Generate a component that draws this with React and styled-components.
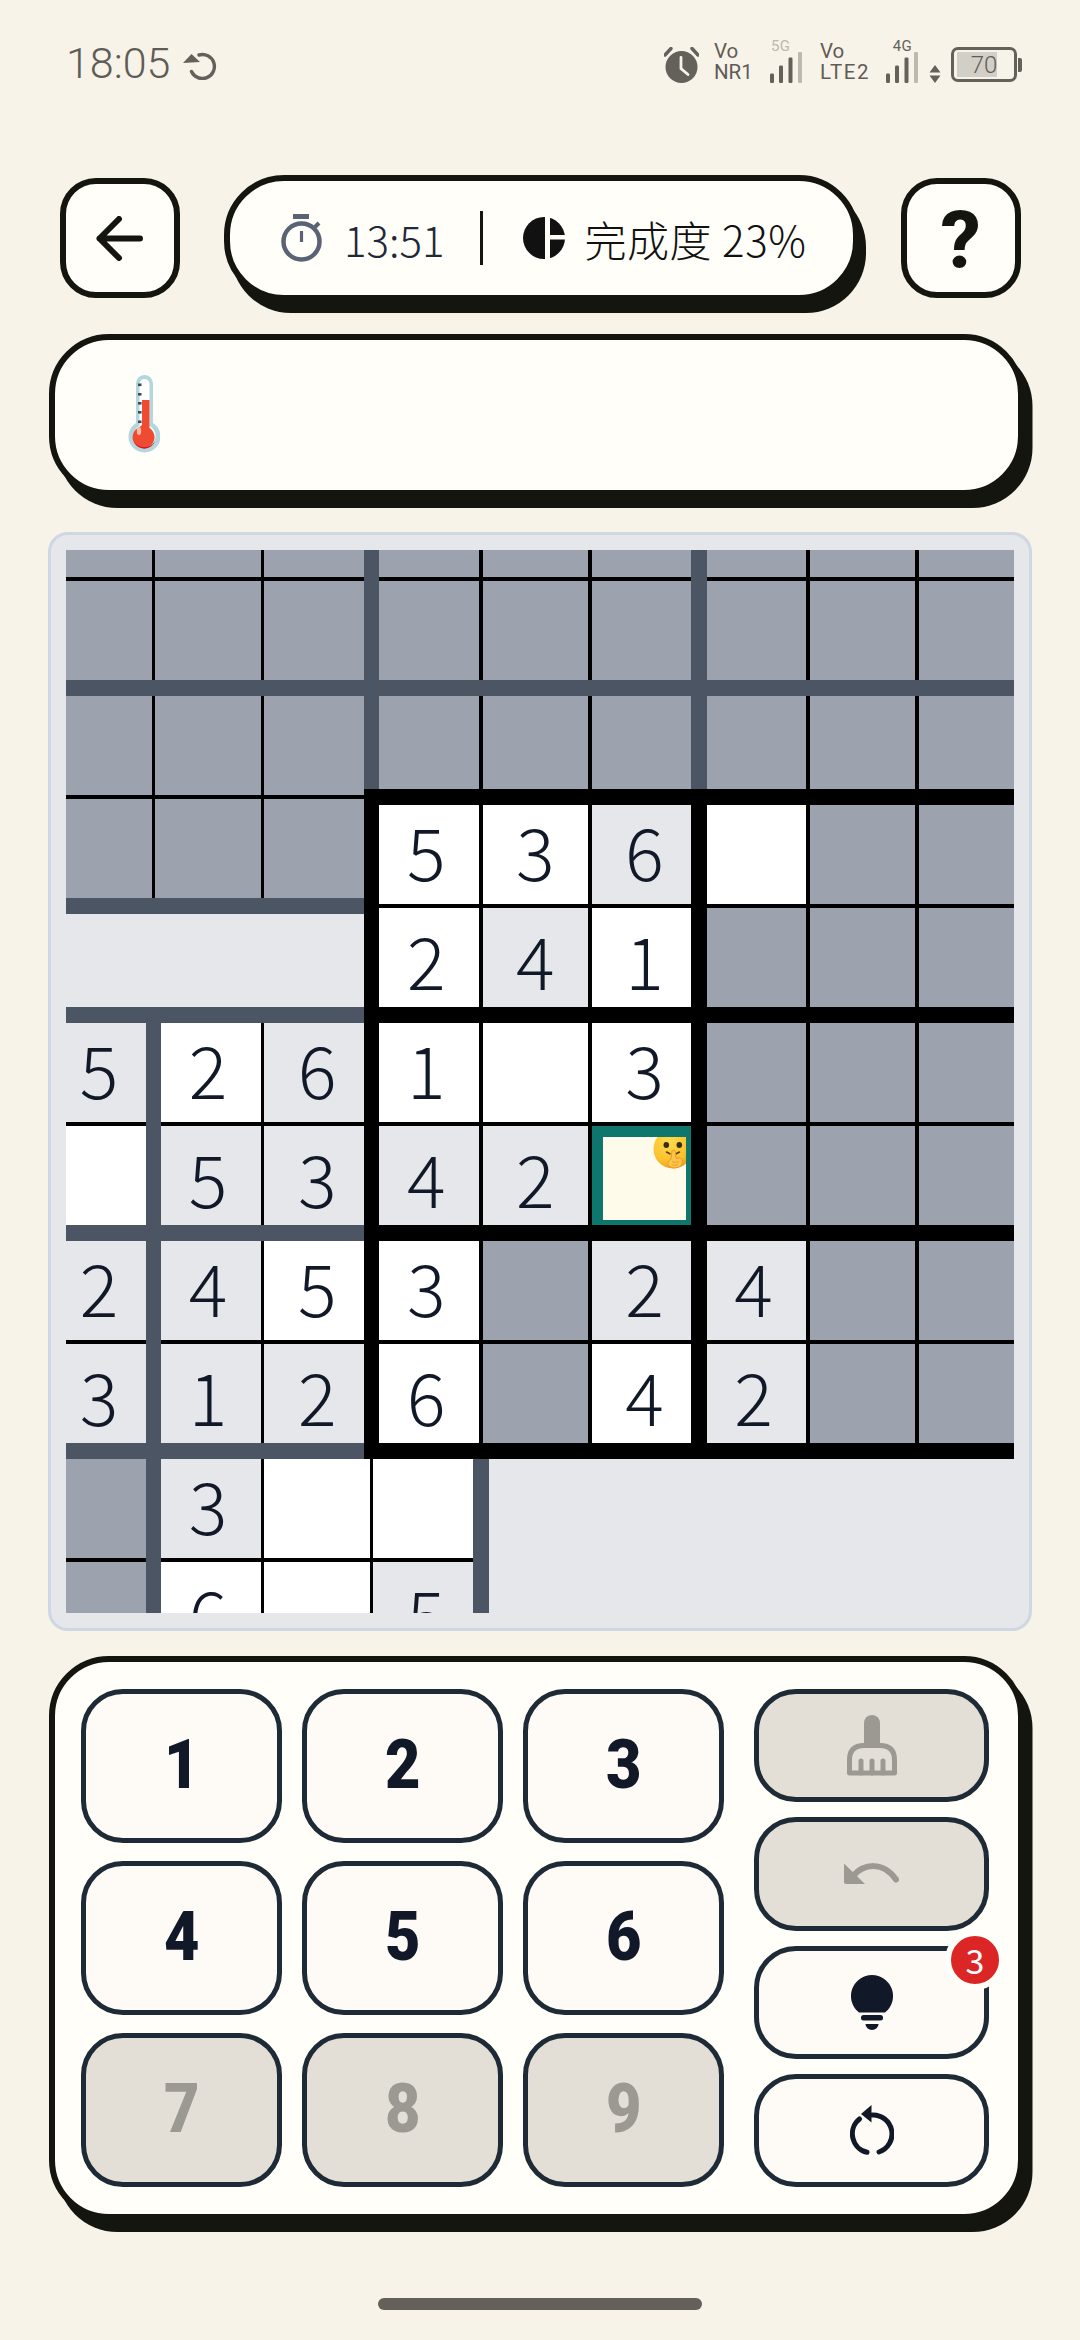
import React from "react";
import styled, { createGlobalStyle } from "styled-components";

const PITCH_X = 109.1;
const PITCH_Y = 109;
const THIN = 3.5;
const THICK = 15.5;
const CJK = `"Noto Sans CJK SC", "Noto Sans", sans-serif`;
const INK = "#15150f";

const Global = createGlobalStyle`
  html, body { margin: 0; padding: 0; background: #f7f3e9; }
  * { box-sizing: border-box; }
`;

const Page = styled.div`
  width: 1080px;
  height: 2340px;
  overflow: hidden;
  background: #f7f3e9;
  display: flex;
  flex-direction: column;
`;

/* ---------- status bar ---------- */
const StatusBar = styled.div`
  height: 84px;
  margin-bottom: 91px;
  padding: 0 58px 1px 66px;
  display: flex;
  align-items: flex-end;
  justify-content: space-between;
  color: #5f5c56;
  font-family: Roboto, sans-serif;
`;
const Clock = styled.div`
  display: flex;
  align-items: flex-end;
  gap: 12px;
  padding-bottom: 3px;
  font-size: 43px;
  font-weight: 300;
  line-height: 34px;
`;
const Cluster = styled.div`
  display: flex;
  align-items: flex-end;
`;
const StatusItem = styled.div`
  margin-left: ${(p) => p.$ml || 0}px;
  width: ${(p) => (p.$w ? `${p.$w}px` : "auto")};
  flex: none;
  display: flex;
  flex-direction: column;
  align-items: ${(p) => p.$align || "flex-start"};
`;
const NetText = styled.span`
  font-size: 20.5px;
  line-height: 21px;
  letter-spacing: ${(p) => p.$ls || 0}px;
  white-space: nowrap;
`;
const TechText = styled.span`
  font-size: 15px;
  line-height: 11px;
  letter-spacing: 0.4px;
  padding-left: 1px;
  color: ${(p) => (p.$dim ? "#bcb9b1" : "#64615b")};
`;
const Battery = styled.div`
  margin-left: 10px;
  display: flex;
  align-items: center;
  margin-bottom: 1px;
`;
const BatteryShell = styled.div`
  position: relative;
  width: 66px;
  height: 35px;
  border: 3.5px solid #64615b;
  border-radius: 7px;
  display: flex;
  align-items: center;
  justify-content: center;
  font-size: 24px;
  font-weight: 300;
`;
const BatteryLevel = styled.div`
  position: absolute;
  left: 3px;
  top: 2px;
  bottom: 2px;
  width: 40px;
  background: #d2cfc6;
`;
const BatteryText = styled.span`
  position: relative;
`;
const BatteryNub = styled.div`
  width: 4px;
  height: 14px;
  margin-left: 1px;
  background: #64615b;
  border-radius: 0 2px 2px 0;
`;

/* ---------- header ---------- */
const Header = styled.div`
  padding: 0 59.5px 0 60px;
  height: 126px;
  display: flex;
  align-items: center;
`;
const SquareButton = styled.div`
  width: 119.5px;
  height: 120px;
  flex: none;
  background: #fffef9;
  border: 6px solid ${INK};
  border-radius: 36px;
  display: flex;
  align-items: center;
  justify-content: center;
`;
const HelpButton = styled(SquareButton)`
  margin-left: auto;
`;
const QuestionMark = styled.span`
  font-family: Roboto, sans-serif;
  font-weight: 800;
  font-size: 80px;
  line-height: 1;
  padding-top: 5px;
  color: ${INK};
`;
const StatPill = styled.div`
  margin-left: 44.5px;
  width: 634.5px;
  height: 126px;
  flex: none;
  background: #fffef9;
  border: 6px solid ${INK};
  border-radius: 60px;
  box-shadow: 7px 12px 0 ${INK};
  display: flex;
  align-items: center;
  padding-left: 51px;
  font-family: ${CJK};
  font-weight: 300;
  font-size: 42px;
`;
const TimeText = styled.span`
  margin-left: 21px;
  color: #1f2937;
`;
const Divider = styled.div`
  width: 3px;
  height: 54px;
  background: ${INK};
  margin: 0 40px 0 36px;
`;
const ProgressText = styled.span`
  margin-left: 19px;
  color: #111;
  letter-spacing: 0.6px;
  white-space: nowrap;
`;

/* ---------- info card ---------- */
const InfoCard = styled.div`
  margin: 33px 0 0 49px;
  width: 974.5px;
  height: 162px;
  background: #fffef9;
  border: 6px solid ${INK};
  border-radius: 60px;
  box-shadow: 8.5px 12px 0 ${INK};
  display: flex;
  align-items: center;
  padding: 0 0 2px 73px;
`;

/* ---------- board ---------- */
const BoardPanel = styled.div`
  margin: 36px 0 0 48px;
  width: 984px;
  height: 1099px;
  padding: 15px;
  background: #e5e7eb;
  border: 3px solid #cfd7e3;
  border-radius: 20px;
`;
const BoardViewport = styled.div`
  width: 948px;
  height: 1063px;
  overflow: hidden;
`;
const BoardGrid = styled.div`
  position: relative;
  margin: -80px 0 0 -21.6px;
  width: ${9 * PITCH_X}px;
  height: ${11 * PITCH_Y}px;
  display: grid;
  grid-template-columns: repeat(9, ${PITCH_X}px);
  grid-template-rows: repeat(11, ${PITCH_Y}px);
`;
const CELL_BG = { g: "#9ca3af", w: "#ffffff", l: "#e5e7eb", x: "transparent" };
const Cell = styled.div`
  position: relative;
  background: ${(p) => CELL_BG[p.$kind]};
  display: flex;
  align-items: center;
  justify-content: center;
  font-family: ${CJK};
  font-weight: 300;
  font-size: 72px;
  line-height: 1;
  padding-bottom: 3px;
  color: #111827;
`;
const SelectedCell = styled.div`
  position: relative;
  background: #fffbeb;
  border: 13px solid #0f766e;
  overflow: hidden;
`;
const EmojiMark = styled.svg`
  position: absolute;
  top: -8px;
  right: -7px;
  width: 40px;
  height: 40px;
`;
const GridLine = styled.div`
  position: absolute;
  background: ${(p) => (p.$kind === "slate" ? "#4b5563" : "#000")};
  ${(p) => {
    const w = p.$kind === "thin" ? THIN : THICK;
    const pad = p.$kind === "black" ? THICK / 2 : 0;
    return p.$dir === "h"
      ? `left:${p.$from * PITCH_X - pad}px;width:${(p.$to - p.$from) * PITCH_X + pad * 2}px;top:${p.$at * PITCH_Y - w / 2}px;height:${w}px;`
      : `top:${p.$from * PITCH_Y - pad}px;height:${(p.$to - p.$from) * PITCH_Y + pad * 2}px;left:${p.$at * PITCH_X - w / 2}px;width:${w}px;`;
  }}
`;

/* ---------- keypad ---------- */
const KeypadCard = styled.div`
  margin: 25px 0 0 49px;
  width: 974.5px;
  height: 564px;
  background: #fffef9;
  border: 6px solid ${INK};
  border-radius: 60px;
  box-shadow: 8.5px 12px 0 ${INK};
  padding: 27px 28.5px 27px 26.4px;
  display: flex;
  justify-content: space-between;
`;
const NumberGrid = styled.div`
  display: grid;
  grid-template-columns: repeat(3, 201px);
  grid-auto-rows: 154px;
  column-gap: 20px;
  row-gap: 18px;
`;
const KeyBase = styled.div`
  background: ${(p) => (p.$off ? "#e3dfd6" : "#fefbf6")};
  border: 5.5px solid #1e2a35;
  display: flex;
  align-items: center;
  justify-content: center;
`;
const NumberKey = styled(KeyBase)`
  border-radius: 42px;
  font-family: Roboto, sans-serif;
  font-weight: 900;
  font-size: 68px;
  line-height: 1;
  padding-bottom: 3px;
  color: ${(p) => (p.$off ? "#9c9992" : "#111827")};
`;
const KeyDigit = styled.span`
  display: inline-block;
  transform: scaleX(0.9);
`;
const ActionColumn = styled.div`
  width: 235px;
  display: flex;
  flex-direction: column;
  gap: 15px;
`;
const ActionKey = styled(KeyBase)`
  position: relative;
  height: 113.5px;
  border-radius: 42px;
`;
const Badge = styled.div`
  position: absolute;
  top: -21px;
  right: -21px;
  width: 60px;
  height: 60px;
  border-radius: 50%;
  background: #dc2626;
  border: 6px solid #fffef9;
  display: flex;
  align-items: center;
  justify-content: center;
  color: #fff;
  font-family: ${CJK};
  font-weight: 400;
  font-size: 34px;
  line-height: 1;
`;

/* ---------- home indicator ---------- */
const HomeBar = styled.div`
  margin: 78px auto 0;
  width: 324px;
  height: 12px;
  border-radius: 6px;
  background: #64615b;
`;

/* ---------- icons ---------- */
const RefreshSmall = () => (
  <svg width="36" height="30" viewBox="0 0 36 30" fill="none">
    <path d="M17 5 A12 12 0 1 1 9.5 21.5" stroke="#64615b" strokeWidth="3.4" strokeLinecap="round" />
    <path d="M9.5 4 L18 12 L1 13 Z" fill="#64615b" />
  </svg>
);
const AlarmIcon = () => (
  <svg width="35" height="36" viewBox="0 0 35 36" style={{ display: "block" }}>
    <circle cx="17.5" cy="20" r="16" fill="#64615b" />
    <path d="M1 8 L7 1.5 M34 8 L28 1.5" stroke="#64615b" strokeWidth="3.4" strokeLinecap="round" />
    <path d="M17 10.5 V21.5 L24 27.5" stroke="#f7f3e9" strokeWidth="2.8" fill="none" strokeLinecap="round" />
  </svg>
);
const SignalBars = () => (
  <svg width="32" height="31" viewBox="0 0 32 31" style={{ display: "block" }}>
    <rect x="0" y="21.5" width="4" height="9.5" rx="1.2" fill="#64615b" />
    <rect x="9" y="13.5" width="4" height="17.5" rx="1.2" fill="#64615b" />
    <rect x="18.5" y="5.5" width="4" height="25.5" rx="1.2" fill="#64615b" />
    <rect x="28" y="0" width="4" height="31" rx="1.2" fill="#bcb9b1" />
  </svg>
);
const UpDown = () => (
  <svg width="12" height="18" viewBox="0 0 12 18" style={{ display: "block" }}>
    <path d="M6 0 L11.5 7.5 H0.5 Z M6 18 L11.5 10.5 H0.5 Z" fill="#64615b" />
  </svg>
);
const BackArrow = () => (
  <svg width="47" height="45" viewBox="0 0 47 45" fill="none" stroke="#15150f" strokeWidth="6" strokeLinecap="round" strokeLinejoin="round">
    <path d="M23 3 L3.5 22.5 L23 42 M3.5 22.5 H44" />
  </svg>
);
const TimerIcon = () => (
  <svg width="42" height="48" viewBox="0 0 42 48" fill="none" style={{ flex: "none" }}>
    <rect x="12" y="0" width="16" height="5" fill="#5a6373" />
    <circle cx="20.5" cy="27.5" r="18" stroke="#5a6373" strokeWidth="4.5" />
    <path d="M20.5 17 V28" stroke="#5a6373" strokeWidth="3.2" />
    <path d="M34 13 L38 9" stroke="#5a6373" strokeWidth="4" />
  </svg>
);
const PieIcon = () => (
  <svg width="42" height="42" viewBox="0 0 42 42" style={{ flex: "none" }}>
    <circle cx="21" cy="21" r="21" fill="#111" />
    <rect x="22" y="0" width="5" height="42" fill="#fffef9" />
    <rect x="27" y="18" width="15" height="4.5" fill="#fffef9" />
  </svg>
);
const Thermometer = () => (
  <svg width="32" height="79" viewBox="0 0 32 79">
    <path d="M8 8.5 a8.5 8.5 0 0 1 17 0 V48 a16 16 0 1 1 -17 0 Z" fill="#b4d7df" />
    <path d="M11.5 9 a5 5 0 0 1 10 0 V51 a11 11 0 1 1 -10 0 Z" fill="#fff" />
    <path d="M14 25 H21.5 V53 a11 11 0 1 1 -10 -1 L14 50 Z" fill="#ef4b30" />
    <path d="M6 66 a11 11 0 0 0 21 0 a12 12 0 0 1 -21 0 Z" fill="#d3152a" />
    <ellipse cx="11" cy="56" rx="2.2" ry="4" fill="#f7b8a8" />
    <g fill="#3d4a55">
      <rect x="10" y="8.5" width="3.5" height="2.6" />
      <rect x="10" y="18" width="3.5" height="2.6" />
      <rect x="10" y="27" width="3.5" height="2.6" />
      <rect x="10" y="36" width="3.5" height="2.6" />
      <rect x="10" y="45.5" width="3.5" height="2.6" />
    </g>
  </svg>
);
const BroomIcon = () => (
  <svg width="50" height="61" viewBox="0 0 50 61" fill="none">
    <path d="M17 30 V8 a8 8 0 0 1 16 0 V30 Z" fill="#9c9992" />
    <path d="M2.5 58 V45 Q2.5 30.5 17 30.5 H33 Q47.5 30.5 47.5 45 V58 Z" stroke="#9c9992" strokeWidth="5" strokeLinejoin="round" />
    <path d="M14 46 V58 M25 46 V58 M36 46 V58" stroke="#9c9992" strokeWidth="5" strokeLinecap="round" />
  </svg>
);
const UndoIcon = () => (
  <svg width="55" height="24" viewBox="0 0 55 24" fill="none">
    <path d="M0 1.5 L21 22 H2 a2 2 0 0 1 -2 -2 Z" fill="#9c9992" />
    <path d="M9 14 C20 1.5 39 -1 52 17.5" stroke="#9c9992" strokeWidth="6" strokeLinecap="round" />
  </svg>
);
const BulbIcon = () => (
  <svg width="42" height="55" viewBox="0 0 42 55" fill="#111827">
    <path d="M21 0 a21 21 0 0 1 13 37.5 H8 A21 21 0 0 1 21 0 Z" />
    <rect x="10" y="40" width="22" height="5.5" rx="2.5" />
    <path d="M14.5 49 H27.5 a6.5 6 0 0 1 -13 0 Z" />
  </svg>
);
const ResetIcon = () => (
  <svg width="44" height="50" viewBox="0 0 44 50" fill="none" stroke="#111827" strokeWidth="5" strokeLinecap="round">
    <path d="M22 10 A19 19 0 0 1 29 47" />
    <path d="M17 47.3 A19 19 0 0 1 9.5 14" />
    <path d="M21.5 0 V17.5 L11 9 Z" fill="#111827" stroke="none" />
  </svg>
);
const ShushEmoji = () => (
  <EmojiMark viewBox="0 0 40 40">
    <defs>
      <radialGradient id="face" cx="40%" cy="30%" r="75%">
        <stop offset="0%" stopColor="#fedc4a" />
        <stop offset="70%" stopColor="#fbc02d" />
        <stop offset="100%" stopColor="#ee9414" />
      </radialGradient>
    </defs>
    <circle cx="20" cy="20" r="19.5" fill="url(#face)" />
    <ellipse cx="13.3" cy="16" rx="2.8" ry="3" fill="#3a2a18" />
    <ellipse cx="26.3" cy="16" rx="2.8" ry="3" fill="#3a2a18" />
    <path d="M13.5 23 l3.4 1.8 M26.5 23 l-3.4 1.8" stroke="#5a3d1c" strokeWidth="1.6" strokeLinecap="round" />
    <path d="M18.8 23 a1.8 1.8 0 0 1 3.6 0 L23 29 Q28 28 29.5 31 Q30 36 25 38.5 Q18 40 15 36 Q13.5 32 18 30 Z" fill="#fcc44c" stroke="#ea9620" strokeWidth="0.9" />
    <path d="M19 33 H26 M19 36 H25" stroke="#ea9620" strokeWidth="0.8" />
  </EmojiMark>
);

/* ---------- data ---------- */
const BOARD = [
  "g g g g g g g g g",
  "g g g g g g g g g",
  "g g g g g g g g g",
  "g g g w5 w3 l6 w g g",
  "x x x w2 l4 w1 g g g",
  "l5 w2 l6 w1 w w3 g g g",
  "w l5 l3 l4 l2 * g g g",
  "l2 l4 w5 w3 g l2 l4 g g",
  "l3 l1 l2 w6 g w4 l2 g g",
  "g l3 w w x x x x x",
  "g w6 w l5 x x x x x",
].map((r) => r.split(" "));

const L = (dir, at, from, to, kind) => ({ dir, at, from, to, kind });
const LINES = [
  L("h", 1, 0, 9, "thin"),
  L("h", 3, 0, 3, "thin"),
  L("h", 4, 3, 9, "thin"),
  L("h", 6, 0, 9, "thin"),
  L("h", 8, 0, 9, "thin"),
  L("h", 10, 0, 4, "thin"),
  L("v", 1, 0, 4, "thin"),
  L("v", 2, 0, 4, "thin"),
  L("v", 2, 5, 11, "thin"),
  L("v", 3, 9, 11, "thin"),
  L("v", 4, 0, 9, "thin"),
  L("v", 5, 0, 9, "thin"),
  L("v", 7, 0, 9, "thin"),
  L("v", 8, 0, 9, "thin"),
  L("h", 2, 0, 9, "slate"),
  L("h", 4, 0, 3, "slate"),
  L("h", 5, 0, 3, "slate"),
  L("h", 7, 0, 3, "slate"),
  L("h", 9, 0, 3, "slate"),
  L("v", 1, 5, 11, "slate"),
  L("v", 3, 0, 3, "slate"),
  L("v", 4, 9, 11, "slate"),
  L("v", 6, 0, 3, "slate"),
  L("h", 3, 3, 9, "black"),
  L("h", 5, 3, 9, "black"),
  L("h", 7, 3, 9, "black"),
  L("h", 9, 3, 9, "black"),
  L("v", 3, 3, 9, "black"),
  L("v", 6, 3, 9, "black"),
];

export default function App() {
  return (
    <Page>
      <Global />
      <StatusBar>
        <Clock>
          18:05
          <RefreshSmall />
        </Clock>
        <Cluster>
          <StatusItem><AlarmIcon /></StatusItem>
          <StatusItem $ml={15} $w={39}>
            <NetText>Vo</NetText>
            <NetText>NR1</NetText>
          </StatusItem>
          <StatusItem $ml={17}>
            <TechText $dim>5G</TechText>
            <SignalBars />
          </StatusItem>
          <StatusItem $ml={18} $w={51}>
            <NetText>Vo</NetText>
            <NetText $ls={1.6}>LTE2</NetText>
          </StatusItem>
          <StatusItem $ml={15} $align="center">
            <TechText>4G</TechText>
            <SignalBars />
          </StatusItem>
          <StatusItem $ml={11}><UpDown /></StatusItem>
          <Battery>
            <BatteryShell>
              <BatteryLevel />
              <BatteryText>70</BatteryText>
            </BatteryShell>
            <BatteryNub />
          </Battery>
        </Cluster>
      </StatusBar>

      <Header>
        <SquareButton><BackArrow /></SquareButton>
        <StatPill>
          <TimerIcon />
          <TimeText>13:51</TimeText>
          <Divider />
          <PieIcon />
          <ProgressText>完成度 23%</ProgressText>
        </StatPill>
        <HelpButton><QuestionMark>?</QuestionMark></HelpButton>
      </Header>

      <InfoCard><Thermometer /></InfoCard>

      <BoardPanel>
        <BoardViewport>
          <BoardGrid>
            {BOARD.flatMap((row, r) =>
              row.map((c, i) =>
                c === "*" ? (
                  <SelectedCell key={`${r}-${i}`}><ShushEmoji /></SelectedCell>
                ) : (
                  <Cell key={`${r}-${i}`} $kind={c[0]}>{c.slice(1)}</Cell>
                )
              )
            )}
            {LINES.map((l, i) => (
              <GridLine key={i} $dir={l.dir} $at={l.at} $from={l.from} $to={l.to} $kind={l.kind} />
            ))}
          </BoardGrid>
        </BoardViewport>
      </BoardPanel>

      <KeypadCard>
        <NumberGrid>
          {[1, 2, 3, 4, 5, 6, 7, 8, 9].map((n) => (
            <NumberKey key={n} $off={n > 6}><KeyDigit>{n}</KeyDigit></NumberKey>
          ))}
        </NumberGrid>
        <ActionColumn>
          <ActionKey $off><BroomIcon /></ActionKey>
          <ActionKey $off><UndoIcon /></ActionKey>
          <ActionKey>
            <BulbIcon />
            <Badge>3</Badge>
          </ActionKey>
          <ActionKey><ResetIcon /></ActionKey>
        </ActionColumn>
      </KeypadCard>

      <HomeBar />
    </Page>
  );
}
